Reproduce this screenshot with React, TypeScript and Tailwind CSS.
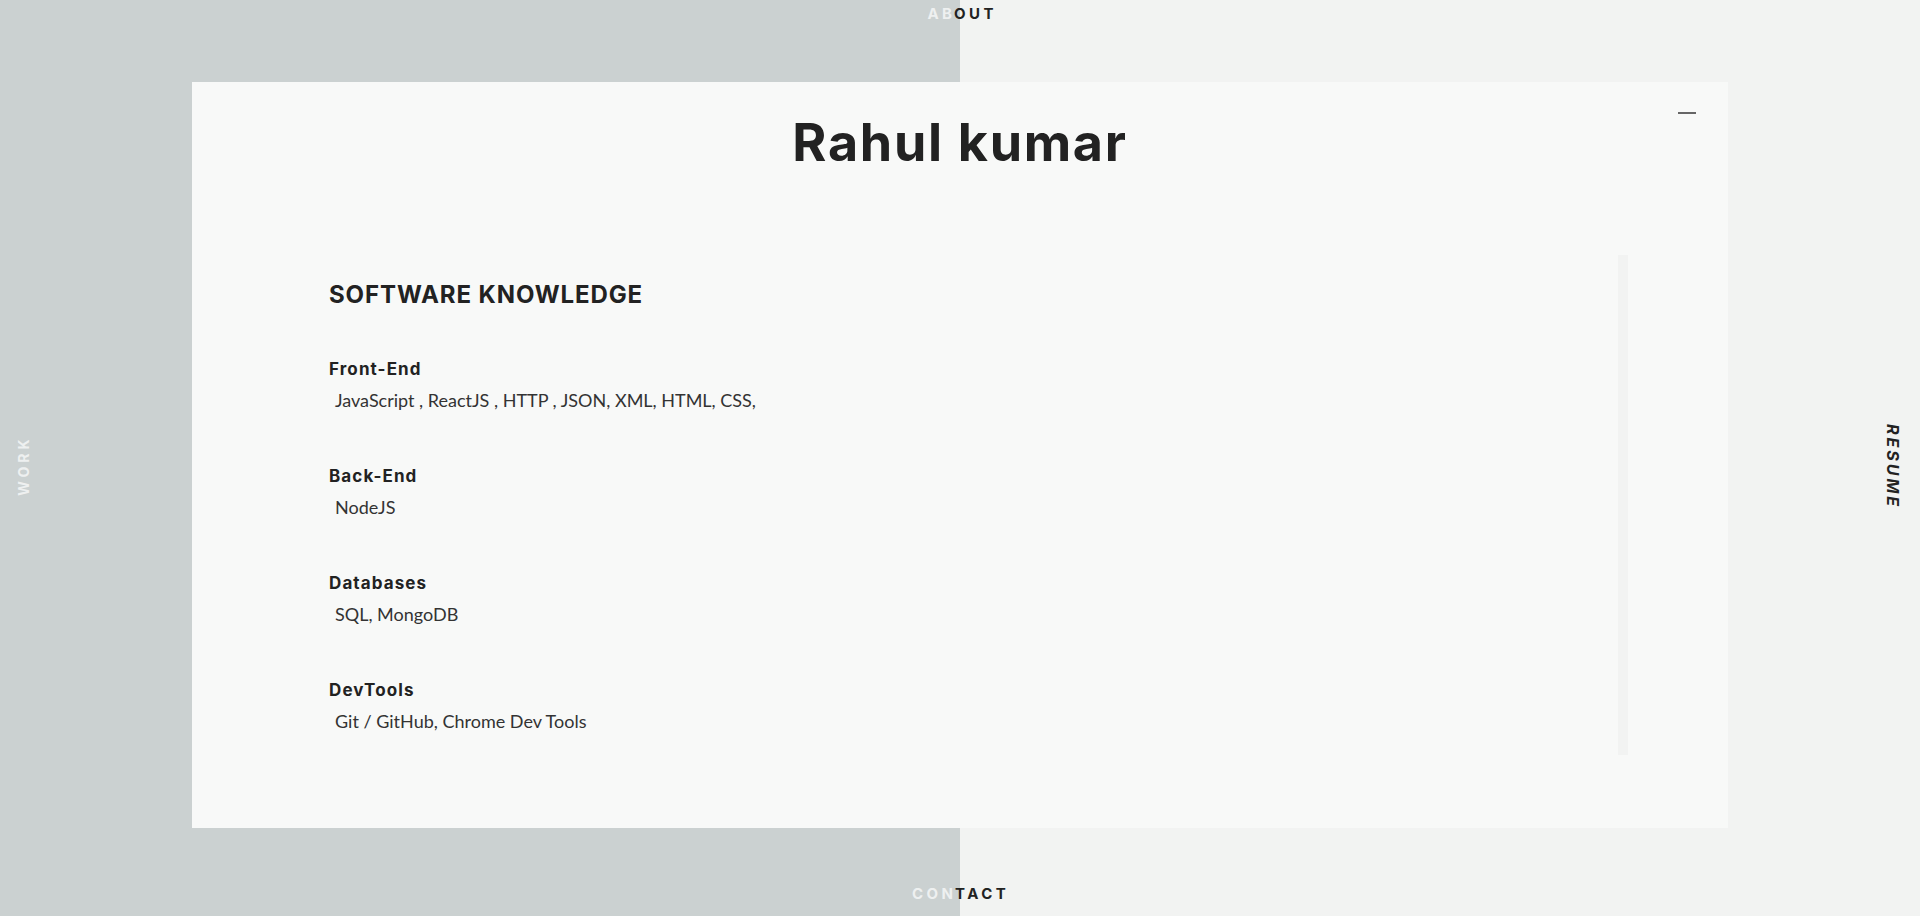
import React from "react";

const head = { fontFamily: '"Inter", "DejaVu Sans", sans-serif' };
const body = { fontFamily: '"Lato", "Open Sans", sans-serif' };

const groups = [
  { label: "Front-End", text: "JavaScript , ReactJS , HTTP , JSON, XML, HTML, CSS," },
  { label: "Back-End", text: "NodeJS" },
  { label: "Databases", text: "SQL, MongoDB" },
  { label: "DevTools", text: "Git / GitHub, Chrome Dev Tools" },
];

function SplitNav({ left, right, lGap, rShift, pos }: { left: string; right: string; lGap: string; rShift: string; pos: string }) {
  return (
    <div style={head} className={`absolute left-0 flex w-full text-[15px] font-bold leading-[18px] tracking-[3.5px] ${pos}`}>
      <div className={`flex w-1/2 justify-end ${lGap}`}>
        <span className="text-[#eef0f0]">{left}</span>
      </div>
      <div className="w-1/2">
        <span className={`inline-block text-[#222] ${rShift}`}>{right}</span>
      </div>
    </div>
  );
}

export default function App() {
  return (
    <div className="relative h-[916px] w-full overflow-hidden bg-[linear-gradient(90deg,#cbd1d1_50%,#f2f3f2_50%)]">
      <SplitNav left="AB" right="OUT" lGap="pr-[4.5px]" rShift="-ml-[6px]" pos="top-[5px]" />
      <SplitNav left="CON" right="TACT" lGap="pr-[3.5px]" rShift="-ml-[5px]" pos="bottom-[13px]" />
      <div
        style={head}
        className="absolute left-[14px] top-[437px] h-[60px] w-[18px] flex items-center justify-center"
      >
        <span className="-rotate-90 whitespace-nowrap pl-[4px] text-[14px] font-bold tracking-[4px] text-[#eef0f0]">WORK</span>
      </div>
      <div
        style={head}
        className="absolute left-[1884px] top-[423px] h-[84px] w-[18px] flex items-center justify-center"
      >
        <span className="rotate-90 whitespace-nowrap pl-[3px] text-[16px] font-bold italic tracking-[3px] text-[#222]">RESUME</span>
      </div>

      {/* card */}
      <div className="flex justify-center pt-[82px]">
        <div className="relative flex h-[746px] w-[1536px] flex-col bg-[#f8f9f8]">
          <div className="absolute right-[32px] top-[30px] h-[2px] w-[18px] bg-[#666]" />
          <h1
            style={head}
            className="mt-[29px] text-center text-[52px] font-bold leading-[64px] tracking-[1.7px] text-[#222]"
          >
            Rahul kumar
          </h1>
          <div className="mx-[100px] mt-[80px] flex h-[500px]">
            <div className="flex flex-1 flex-col pl-[37px] pt-[25px]">
              <h2 style={head} className="text-[24px] font-bold leading-[30px] tracking-[0.9px] text-[#222]">
                SOFTWARE KNOWLEDGE
              </h2>
              <div className="mt-[47px] flex flex-col gap-[50px]">
                {groups.map((g) => (
                  <div key={g.label} className="flex flex-col gap-[5px]">
                    <div style={head} className="text-[17px] font-bold leading-[24px] tracking-[1.1px] text-[#222]">
                      {g.label}
                    </div>
                    <div style={body} className="pl-[6px] text-[18px] font-normal leading-[28px] text-[#333]">
                      {g.text}
                    </div>
                  </div>
                ))}
              </div>
            </div>
            <div className="w-[10px] bg-[#f2f3f2]" />
          </div>
        </div>
      </div>
    </div>
  );
}
